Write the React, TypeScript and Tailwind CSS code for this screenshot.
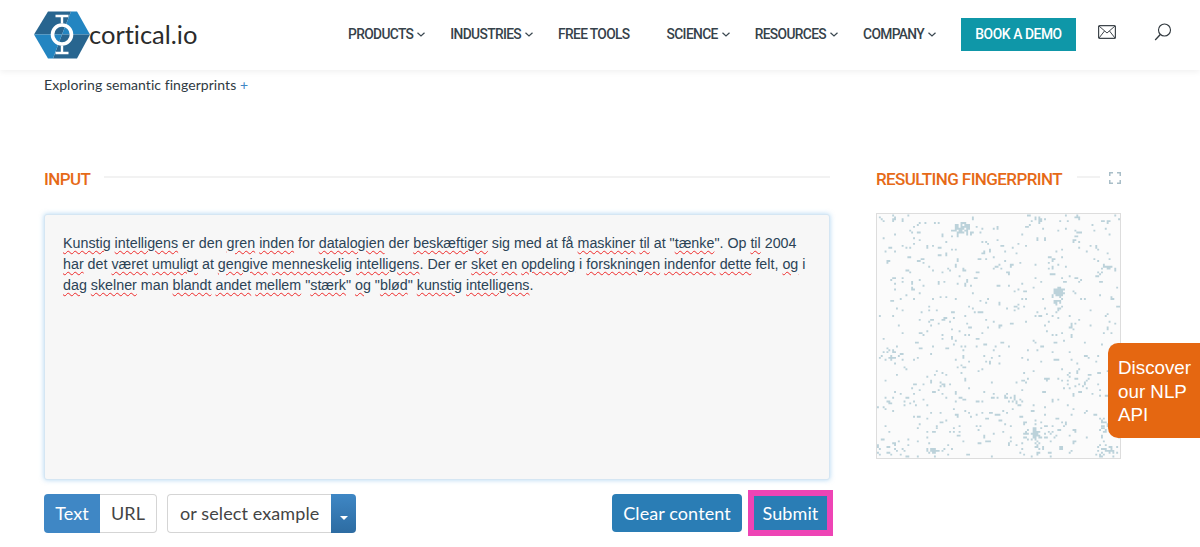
import React from "react";

function makeDots(): string {
  let s = 20231;
  const r = () => {
    s = (s * 1664525 + 1013904223) >>> 0;
    return s / 4294967296;
  };
  const cell = 245 / 128;
  const on = new Set<number>();
  const put = (x: number, y: number) => {
    if (x >= 0 && x < 128 && y >= 0 && y < 128) on.add(y * 128 + x);
  };
  for (let i = 0; i < 640; i++) {
    const x = Math.floor(r() * 128);
    const y = Math.floor(r() * 128);
    put(x, y);
    if (r() < 0.15) put(x + 1, y);
    if (r() < 0.08) put(x, y + 1);
  }
  const clusters: [number, number, number, number, number][] = [
    [45, 7, 4, 2, 70],
    [96, 40, 2, 2, 40],
    [95, 46, 2, 5, 24],
    [83, 116, 2, 3, 34],
    [82, 116, 9, 6, 34],
    [33, 124, 6, 1, 16],
    [119, 110, 2, 3, 14],
    [8, 73, 5, 3, 18],
    [105, 87, 6, 5, 18],
    [73, 98, 3, 2, 10],
    [120, 124, 5, 3, 20],
    [85, 2, 4, 1, 12],
    [6, 124, 7, 3, 14],
  ];
  for (const [cx, cy, sx, sy, n] of clusters) {
    for (let i = 0; i < n; i++) {
      const x = Math.round(cx + (r() + r() - 1) * sx * 1.5);
      const y = Math.round(cy + (r() + r() - 1) * sy * 1.5);
      put(x, y);
    }
  }
  let d = "";
  on.forEach((k) => {
    const x = (k % 128) * cell;
    const y = Math.floor(k / 128) * cell;
    d += `M${x.toFixed(2)} ${y.toFixed(2)}h${cell.toFixed(2)}v${cell.toFixed(2)}h-${cell.toFixed(2)}z`;
  });
  return d;
}
const dots = makeDots();

const nav: [string, boolean][] = [
  ["PRODUCTS", true],
  ["INDUSTRIES", true],
  ["FREE TOOLS", false],
  ["SCIENCE", true],
  ["RESOURCES", true],
  ["COMPANY", true],
];

function Chevron({ show }: { show: boolean }) {
  return (
    <svg width="8" height="5" viewBox="0 0 8 5" className={show ? "ml-[4px] shrink-0" : "ml-[4px] shrink-0 invisible"}>
      <path d="M0.5 0.7 L4 4 L7.5 0.7" fill="none" stroke="#3a4750" strokeWidth="1.2" />
    </svg>
  );
}

function Logo() {
  return (
    <svg width="58" height="48" viewBox="32 11.5 58 48" className="shrink-0">
      <path d="M33 35 L47 12 L70 12 L61 35 Z" fill="#28658f" />
      <path d="M70 12 L76 12 L89 35 L61 35 Z" fill="#2385c1" />
      <path d="M89 35 L76 59 L52 59 L61 35 Z" fill="#28658f" />
      <path d="M33 35 L47 59 L52 59 L61 35 Z" fill="#2385c1" />
      <circle cx="61" cy="35" r="9.5" fill="none" stroke="#fff" strokeWidth="3.6" />
      <path d="M61 16 V24 M61 46 V54 M54.5 16.5 H67.5 M54.5 53.5 H67.5" stroke="#fff" strokeWidth="2.4" fill="none" />
    </svg>
  );
}

const S = ({ children }: { children: React.ReactNode }) => (
  <span className="underline decoration-wavy decoration-[#ee2a2a] decoration-1 underline-offset-2">{children}</span>
);

function SectionTitle({ children }: { children: React.ReactNode }) {
  return (
    <div className="pt-[2px] font-['Roboto',sans-serif] font-medium text-[17px] leading-[22px] tracking-[-0.6px] text-[#e66a17] whitespace-nowrap">
      {children}
    </div>
  );
}

export default function App() {
  return (
    <div className="relative h-[547px] w-[1200px] overflow-hidden bg-white font-['Lato',sans-serif] [font-variant-ligatures:none]">
      <header className="flex h-[70px] items-center bg-white pl-[33px] shadow-[0_2px_6px_rgba(0,0,0,0.06)]">
        <Logo />
        <span className="ml-[-2px] w-[110px] shrink-0 font-['Lato',sans-serif] text-[25.5px] leading-none text-[#2b2b2b]">cortical.io</span>
        <nav className="mb-[1px] ml-[149px] flex items-center">
          {nav.map(([label, chev]) => (
            <a key={label} className="mr-[25px] flex items-center whitespace-nowrap font-['Roboto',sans-serif] text-[13.8px] font-medium tracking-[-0.65px] text-[#36424a]">
              {label}
              <Chevron show={chev} />
            </a>
          ))}
        </nav>
        <a className="mb-[2px] flex h-[33px] w-[115px] shrink-0 items-center justify-center whitespace-nowrap bg-[#0f97a8] font-['Roboto',sans-serif] text-[13.8px] font-medium tracking-[-0.4px] text-white">BOOK A DEMO</a>
        <svg width="18" height="14" viewBox="0 0 18 14" className="mb-[6px] ml-[22px] shrink-0">
          <rect x="0.6" y="0.6" width="16.8" height="12.8" rx="1" fill="none" stroke="#3f464c" strokeWidth="1.2" />
          <path d="M1 1 L9 8 L17 1 M1 13 L6.5 6 M17 13 L11.5 6" fill="none" stroke="#3f464c" strokeWidth="1" />
        </svg>
        <svg width="18" height="18" viewBox="0 0 18 18" className="mb-[6px] ml-[38px] shrink-0">
          <circle cx="10.5" cy="7" r="6" fill="none" stroke="#30383e" strokeWidth="1.1" />
          <path d="M6.3 11.5 L1.2 17" stroke="#30383e" strokeWidth="1.3" />
        </svg>
      </header>

      <main className="px-[44px]">
        <div className="mt-[6px] text-[14px] leading-[17px] tracking-[0.06px] text-[#2f3a42]">
          Exploring semantic fingerprints <span className="text-[#3f87c5]">+</span>
        </div>

        <div className="mt-[74px] flex gap-[46px]">
          <section className="w-[786px]">
            <div className="flex h-[22px] items-center gap-[14px]">
              <SectionTitle>INPUT</SectionTitle>
              <div className="mb-[3px] h-[2px] flex-1 bg-[#f2f2f2]" />
            </div>
            <div className="mt-[25px] h-[266px] rounded-[3px] border border-[#d5e6f3] bg-[#f7f7f7] px-[18px] py-[18px] font-['Liberation_Sans',sans-serif] text-[14.29px] leading-[21px] text-[#2b4356] shadow-[0_0_5px_rgba(102,175,233,0.5)]">
              <S>Kunstig</S> <S>intelligens</S> er den <S>gren</S> <S>inden</S> for <S>datalogien</S> der <S>beskæftiger</S> sig med at få <S>maskiner</S> <S>til</S> at "<S>tænke</S>". Op <S>til</S> 2004 <S>har</S> det <S>været</S> <S>umuligt</S> at <S>gengive</S> <S>menneskelig</S> <S>intelligens</S>. Der er <S>sket</S> <S>en</S> <S>opdeling</S> i <S>forskningen</S> <S>indenfor</S> <S>dette</S> felt, <S>og</S> i <S>dag</S> <S>skelner</S> man <S>blandt</S> <S>andet</S> <S>mellem</S> "<S>stærk</S>" <S>og</S> "<S>blød</S>" <S>kunstig</S> <S>intelligens</S>.
            </div>
            <div className="mt-[14px] flex items-start text-[18px] tracking-[0.1px]">
              <div className="flex h-[39px]">
                <button className="w-[56px] rounded-l-[4px] bg-[#3f87c5] text-white">Text</button>
                <button className="w-[57px] rounded-r-[4px] border border-l-0 border-[#d5d5d5] bg-white text-[#444]">URL</button>
              </div>
              <div className="ml-[10px] flex h-[39px]">
                <div className="flex w-[164px] items-center rounded-l-[4px] border border-r-0 border-[#d5d5d5] bg-white pl-[12px] text-[#444]">or select example</div>
                <div className="flex w-[25px] items-center justify-center rounded-r-[4px] bg-gradient-to-b from-[#3f87c5] to-[#2d6ca2]">
                  <div className="mt-[8px] h-0 w-0 border-x-[4px] border-t-[4px] border-x-transparent border-t-white" />
                </div>
              </div>
              <button className="ml-auto h-[38px] w-[130px] rounded-[4px] bg-[#2a7db5] text-white">Clear content</button>
              <button className="ml-[6px] mt-[-4px] mr-[-3px] h-[46px] w-[85px] border-[6px] border-[#ee44b5] bg-[#2a7db5] text-white">Submit</button>
            </div>
          </section>

          <section className="w-[245px] shrink-0">
            <div className="flex h-[22px] items-center">
              <SectionTitle>RESULTING FINGERPRINT</SectionTitle>
              <div className="mb-[3px] ml-[15px] h-[2px] w-[23px] bg-[#f2f2f2]" />
              <svg width="12" height="12" viewBox="0 0 12 12" className="ml-auto shrink-0">
                <path d="M0.75 4 V0.75 H4 M8 0.75 H11.25 V4 M11.25 8 V11.25 H8 M4 11.25 H0.75 V8" fill="none" stroke="#a9bec8" strokeWidth="1.5" />
              </svg>
            </div>
            <div className="mt-[24px] h-[246px] w-[245px] border border-[#dddddd] bg-[#fbfbfb]">
              <svg width="243" height="244" viewBox="0 0 245 245" className="block">
                <path d={dots} fill="#bcd2da" />
              </svg>
            </div>
          </section>
        </div>
      </main>

      <a className="absolute right-0 top-[343px] h-[95px] w-[92px] rounded-l-[10px] bg-[#e56711] pl-[10px] pt-[13px] font-['Liberation_Sans',sans-serif] text-[18.8px] leading-[23.5px] text-white">
        Discover our NLP API
      </a>
    </div>
  );
}
